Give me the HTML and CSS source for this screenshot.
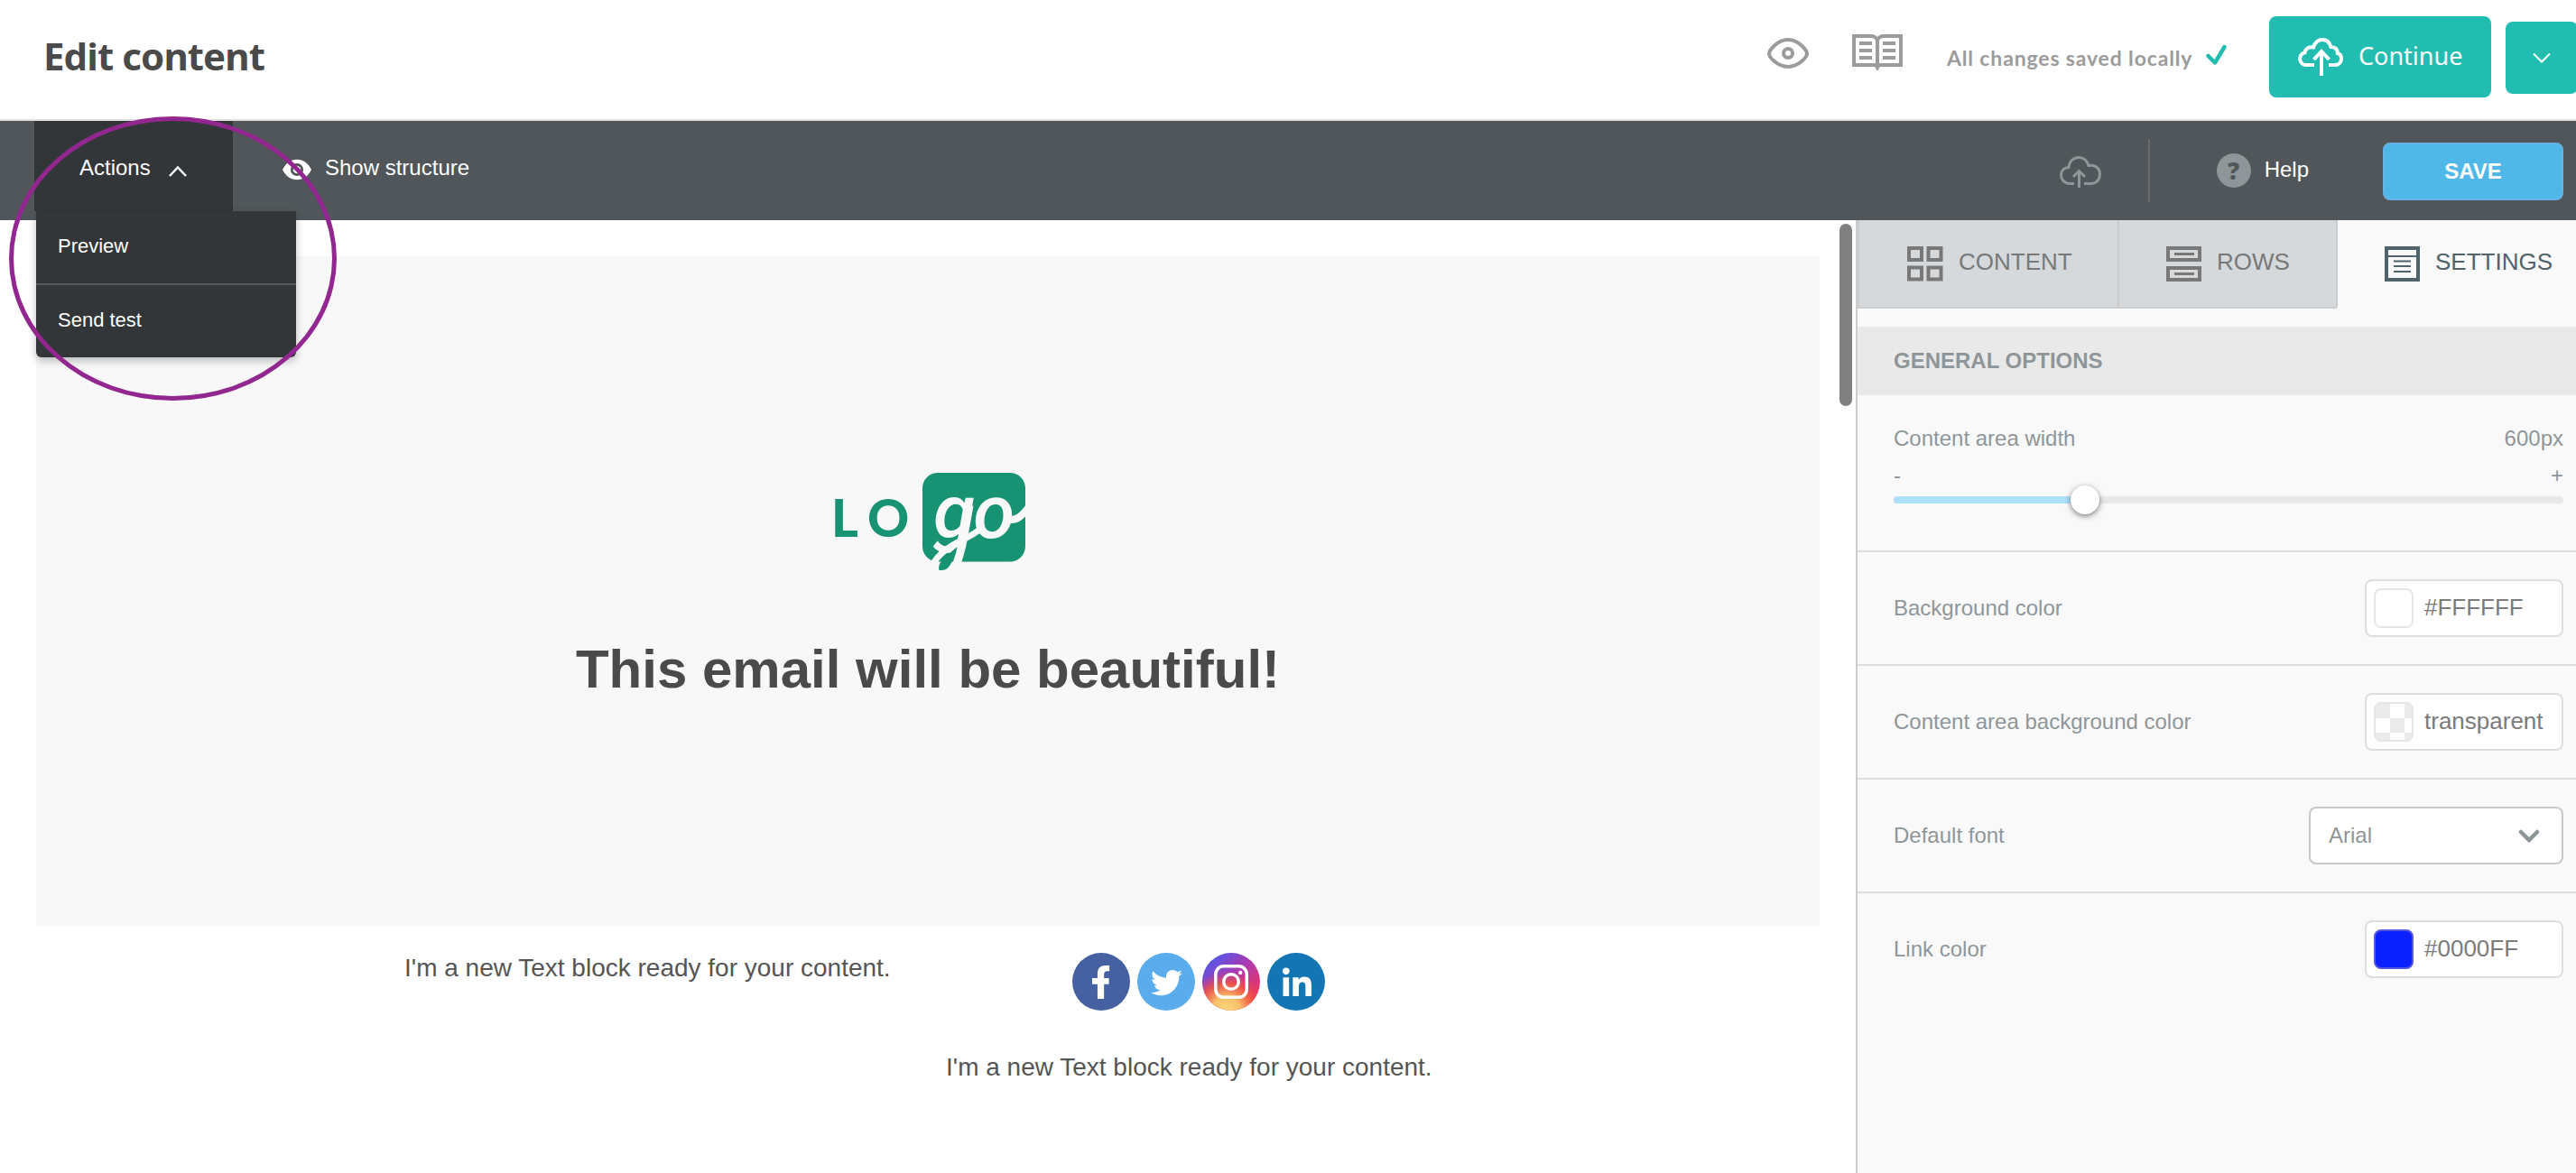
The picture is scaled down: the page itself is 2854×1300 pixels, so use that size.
FILE: index.html
```html
<!DOCTYPE html>
<html lang="en">
<head>
<meta charset="UTF-8">
<title>Edit content</title>
<link rel="stylesheet" href="styles.css">
</head>
<body>
<header class="header">
  <h1>Edit content</h1>
  <div class="header-tools">
    <svg class="icon-eye" width="46" height="34" viewBox="0 0 46 34" fill="none" stroke="#9b9b9b" stroke-width="4">
      <path d="M2 17.500C2 14 11 2 23 2s21 12 21 15.500S35 32 23 32 2 21 2 17.500z"/>
      <circle cx="23" cy="17" r="5"/>
    </svg>
    <svg class="icon-book" width="56" height="40" viewBox="0 0 56 40" fill="none" stroke="#9b9b9b" stroke-width="4">
      <path d="M28 36V6.500Q26 2 21 2H2v32h22q3 0 4 2.500Q29 34 32 34h22V2H35q-5 0-7 4.500"/>
      <path d="M8 10h14M8 18h14M8 26h14M34 10h14M34 18h14M34 26h14"/>
    </svg>
    <span class="saved">All changes saved locally</span>
    <svg class="icon-check" width="24" height="24" viewBox="0 0 24 24" fill="none" stroke="#22bdb1" stroke-width="4.500" stroke-linecap="round" stroke-linejoin="round">
      <path d="M2.500 13l7.500 7.500L20.500 3"/>
    </svg>
    <button class="btn-continue">
      <svg width="50" height="43" viewBox="0 0 50 43" fill="none" stroke="#fff" stroke-width="4">
        <path d="M18 30H9a7 7 0 0 1-1.500-13.800C8 12 12 9.500 17 10.500 19 4.500 23 2 27 2s8 2.500 9.500 8c5 0 7.500 3 7.300 7C47 18 48 21 48 23c0 4-3 7-7 7h-7"/>
        <path d="M26 42V15M17.500 24l8.500-9 8.500 9"/>
      </svg>
      <span>Continue</span>
    </button>
    <button class="btn-more">
      <svg width="20" height="12" viewBox="0 0 20 12" fill="none" stroke="#fff" stroke-width="2"><path d="M1 1.500l9 9 9-9"/></svg>
    </button>
  </div>
</header>

<nav class="toolbar">
  <div class="actions">
    <span>Actions</span>
    <svg width="20" height="13" viewBox="0 0 20 13" fill="none" stroke="#fff" stroke-width="2.500"><path d="M1 12l9-9.500 9 9.500"/></svg>
    <ul class="menu">
      <li>Preview</li>
      <li>Send test</li>
    </ul>
  </div>
  <div class="structure">
    <svg width="32" height="24" viewBox="0 0 34 24">
      <path fill="#fff" d="M0 12C4 4 10 0 17 0s13 4 17 12c-4 8-10 12-17 12S4 20 0 12z"/>
      <circle cx="17" cy="12" r="6" fill="none" stroke="#505659" stroke-width="3"/>
    </svg>
    <span>Show structure</span>
  </div>
  <div class="toolbar-right">
    <svg class="icon-cloud" width="46" height="36" viewBox="0 0 46 36" fill="none" stroke="#8e9699" stroke-width="3">
      <path d="M16 30.500h-5C5.500 30.500 1.500 26 1.500 21S5 12.500 10 12.500C10.500 6 15 1.500 21 1.500c5 0 9.500 3.500 11 9 7-1.500 12.500 3 12.500 9.500 0 6-4 10.500-10 10.500H27"/>
      <path d="M21.500 35V16M15 23l6.500-6.500L28 23"/>
    </svg>
    <div class="help">
      <span class="help-mark">?</span>
      <span>Help</span>
    </div>
    <button class="btn-save">SAVE</button>
  </div>
</nav>

<main class="editor">
  <section class="canvas">
    <div class="hero">
      <svg class="logo" width="254" height="150" viewBox="-20 -20 254 150">
        <defs>
          <clipPath id="logo-clip"><rect x="99" width="114" height="110"/></clipPath>
        </defs>
        <g class="logo-lo"><text x="-2" y="71">L</text><text x="38" y="71">O</text></g>
        <rect x="99" width="114" height="98.500" rx="17" fill="#179273"/>
        <text class="logo-go" x="111" y="72">go</text>
        <g clip-path="url(#logo-clip)" fill="none" stroke="#f8f8f8">
          <path d="M151 36L145 70Q141 92 134 108" stroke-width="9"/>
          <path d="M109 104C122 78 152 74 163 62" stroke-width="7"/>
          <path d="M197 52c7 0 12-4 19-13" stroke-width="8"/>
        </g>
        <path d="M137.500 82c-1 8-6 18-10 23-3 3-6 3-10 3-2-9 7-15 20-26z" fill="#179273"/>
      </svg>
      <h2>This email will be beautiful!</h2>
    </div>
    <div class="blocks">
      <p>I'm a new Text block ready for your content.</p>
      <div class="social">
        <svg width="64" height="64" viewBox="0 0 64 64">
          <circle cx="32" cy="32" r="32" fill="#4661a1"/>
          <path fill="#fff" transform="translate(20.400 14) scale(.0723)" d="M279.140 288v-92.660h-74.690v-60.130c0-25.350 12.420-50.060 52.240-50.060h30.420V2S260.430 0 225.360 0c-73.220 0-121.080 44.380-121.080 124.720v70.620H22.890V288h81.390v224h100.170V288z"/>
        </svg>
        <svg width="64" height="64" viewBox="0 0 64 64">
          <circle cx="32" cy="32" r="32" fill="#5aacec"/>
          <path fill="#fff" transform="translate(15 15.700) scale(.068)" d="M459.370 151.716c.325 4.548.325 9.097.325 13.645 0 138.720-105.583 298.558-298.558 298.558-59.452 0-114.680-17.219-161.137-47.106 8.447.974 16.568 1.299 25.340 1.299 49.055 0 94.213-16.568 130.274-44.832-46.132-.975-84.792-31.188-98.112-72.772 6.498.974 12.995 1.624 19.818 1.624 9.421 0 18.843-1.300 27.614-3.573-48.081-9.747-84.143-51.980-84.143-102.985v-1.299c13.969 7.797 30.214 12.670 47.431 13.319-28.264-18.843-46.781-51.005-46.781-87.391 0-19.492 5.197-37.360 14.294-52.954 51.655 63.675 129.300 105.258 216.365 109.807-1.624-7.797-2.599-15.918-2.599-24.040 0-57.828 46.782-104.934 104.934-104.934 30.213 0 57.502 12.670 76.670 33.137 23.715-4.548 46.456-13.320 66.599-25.340-7.798 24.366-24.366 44.833-46.132 57.827 21.117-2.273 41.584-8.122 60.426-16.243-14.292 20.791-32.161 39.308-52.628 54.253z"/>
        </svg>
        <svg width="64" height="64" viewBox="0 0 64 64">
          <defs>
            <linearGradient id="ig-base" x1=".2" y1="0" x2=".85" y2=".8">
              <stop offset="0" stop-color="#4a5bf0"/>
              <stop offset=".45" stop-color="#a63bb5"/>
              <stop offset="1" stop-color="#f2365d"/>
            </linearGradient>
            <radialGradient id="ig-glow" cx=".42" cy="1" r=".68">
              <stop offset="0" stop-color="#fbd77e"/>
              <stop offset=".35" stop-color="#f9c067"/>
              <stop offset=".7" stop-color="#f2573f" stop-opacity=".85"/>
              <stop offset="1" stop-color="#e0415c" stop-opacity="0"/>
            </radialGradient>
          </defs>
          <circle cx="32" cy="32" r="32" fill="url(#ig-base)"/>
          <circle cx="32" cy="32" r="32" fill="url(#ig-glow)"/>
          <g fill="none" stroke="#fff" stroke-width="3.500">
            <rect x="14.800" y="14.800" width="34.500" height="34.500" rx="9"/>
            <circle cx="32" cy="32" r="8.300"/>
          </g>
          <circle cx="42.200" cy="22" r="2.200" fill="#fff"/>
        </svg>
        <svg width="64" height="64" viewBox="0 0 64 64">
          <circle cx="32" cy="32" r="32" fill="#1375b3"/>
          <path fill="#fff" transform="translate(17 16.500) scale(.0715)" d="M100.280 440H7.400V148.900h92.880zM53.790 108.100C24.090 108.100 0 83.500 0 53.800a53.790 53.790 0 0 1 107.580 0c0 29.700-24.100 54.300-53.790 54.300zM447.900 440h-92.680V302.400c0-34.700-.7-79.200-48.290-79.200-48.290 0-55.690 37.700-55.690 76.700V440h-92.780V148.900h89.080v40.800h1.300c12.400-23.500 42.690-48.300 87.880-48.300 94 0 111.280 61.900 111.280 142.300V440z"/>
        </svg>
      </div>
      <p class="second">I'm a new Text block ready for your content.</p>
    </div>
    <div class="scrollbar"></div>
  </section>

  <aside class="panel">
    <div class="tabs">
      <div class="tab tab-content">
        <svg width="40" height="39" viewBox="0 0 40 39" fill="none" stroke="#787878" stroke-width="4">
          <path d="M2 2h14v13H2zM23.500 2h14v13h-14zM2 23.500h14v13H2zM23.500 23.500h14v13h-14z"/>
        </svg>
        <span>CONTENT</span>
      </div>
      <div class="tab tab-rows">
        <svg width="39" height="39" viewBox="0 0 39 39" fill="none" stroke="#787878" stroke-width="4">
          <path d="M2 2h35v13H2zM2 24h35v13H2z"/>
          <path stroke-width="3" d="M9 8.500h22M9 30.500h22"/>
        </svg>
        <span>ROWS</span>
      </div>
      <div class="tab tab-settings">
        <svg width="39" height="39" viewBox="0 0 39 39" fill="none" stroke="#50626a" stroke-width="4">
          <path d="M2 2h35v35H2z"/>
          <path stroke-width="2" d="M4 11h31M10 16.500h19M10 22h19M10 28h19"/>
        </svg>
        <span>SETTINGS</span>
      </div>
    </div>
    <h3>GENERAL OPTIONS</h3>
    <div class="width-option">
      <div class="line"><span>Content area width</span><span>600px</span></div>
      <div class="line steps"><span>-</span><span>+</span></div>
      <div class="slider"><div class="slider-fill"></div><div class="slider-thumb"></div></div>
    </div>
    <div class="option">
      <label>Background color</label>
      <div class="color-input"><i class="swatch"></i>#FFFFFF</div>
    </div>
    <div class="option">
      <label>Content area background color</label>
      <div class="color-input"><i class="swatch checker"></i>transparent</div>
    </div>
    <div class="option">
      <label>Default font</label>
      <div class="select">Arial
        <svg width="26" height="17" viewBox="0 0 26 17" fill="none" stroke="#8e9699" stroke-width="4.500" stroke-linecap="round"><path d="M4 4l9 9 9-9"/></svg>
      </div>
    </div>
    <div class="option">
      <label>Link color</label>
      <div class="color-input"><i class="swatch blue"></i>#0000FF</div>
    </div>
  </aside>
</main>

<!-- highlight around the Actions menu -->
<div class="highlight"></div>
</body>
</html>
```
FILE: styles.css
```css
* {
    box-sizing: border-box;
}
body {
    margin: 0;
    width: 2854px;
    height: 1300px;
    overflow: hidden;
    position: relative;
    background: #fff;
    font-family: "Liberation Sans", Arial, sans-serif;
    font-size: 24px;
}
svg {
    display: block;
    flex: none;
}
button {
    border: 0;
    padding: 0;
    color: #fff;
    flex: none;
}

/* header */
.header {
    height: 134px;
    border-bottom: 2px solid #e0e0e0;
    display: flex;
    justify-content: space-between;
    padding-left: 48px;
}
h1 {
    margin: 32px 0 0;
    font: bold 42px/60px "Noto Sans", sans-serif;
    letter-spacing: -.9px;
    color: #4a4a4a;
    white-space: nowrap;
}
.header-tools {
    display: flex;
    align-items: flex-start;
    width: 898px;
    margin-right: -2px;
    flex: none;
}
.icon-eye {
    margin-top: 42px;
}
.icon-book {
    margin: 38px 0 0 48px;
}
.saved {
    margin: 49px 0 0 49px;
    width: 287px;
    flex: none;
    font: bold 23px/30px Lato, sans-serif;
    letter-spacing: .85px;
    color: #9b9b9b;
    white-space: nowrap;
}
.icon-check {
    margin: 49px 46px 0 0;
}
.btn-continue {
    width: 246px;
    height: 90px;
    margin: 18px 16px 0 0;
    padding: 0 0 0 32px;
    border-radius: 8px;
    background: #22bdb1;
    display: flex;
    align-items: center;
    gap: 17px;
    font: 27px/40px "Noto Sans", sans-serif;
}
.btn-continue span {
    padding-bottom: 3px;
}
.btn-more {
    width: 80px;
    height: 80px;
    margin-top: 24px;
    border-radius: 8px;
    background: #22bdb1;
    display: flex;
    align-items: center;
    justify-content: center;
}

/* toolbar */
.toolbar {
    height: 110px;
    background: #505659;
    color: #fff;
    display: flex;
    padding-left: 38px;
}
.actions {
    position: relative;
    width: 220px;
    height: 100px;
    padding: 3px 0 0 50px;
    display: flex;
    align-items: center;
    gap: 20px;
    background: #323639;
}
.actions > svg {
    margin-top: 7px;
}
.menu {
    position: absolute;
    left: 2px;
    top: 100px;
    z-index: 2;
    width: 288px;
    margin: 0;
    padding: 0;
    list-style: none;
    font-size: 22px;
    background: #323639;
    border-radius: 0 0 6px 6px;
    box-shadow: 0 4px 10px rgba(0, 0, 0, .25);
}
.menu li {
    height: 80px;
    padding-left: 24px;
    line-height: 77px;
}
.menu li + li {
    height: 82px;
    border-top: 2px solid #55585a;
}
.structure {
    display: flex;
    align-items: center;
    gap: 15px;
    height: 104px;
    margin-left: 55px;
}
.structure svg {
    margin-top: 4px;
}
.toolbar-right {
    display: flex;
    align-items: center;
    margin-left: auto;
    padding-right: 14px;
}
.icon-cloud {
    margin: 4px 52px 0 0;
}
.help {
    display: flex;
    align-items: center;
    gap: 15px;
    height: 70px;
    padding-left: 74px;
    margin-right: 82px;
    border-left: 2px solid #6b6b69;
}
.help-mark {
    width: 38px;
    height: 38px;
    border-radius: 50%;
    background: #8e9699;
    color: #505659;
    font: 800 26px/38px "Open Sans", sans-serif;
    text-align: center;
}
.help span + span {
    padding-bottom: 3px;
}
.btn-save {
    width: 200px;
    height: 64px;
    margin-top: 2px;
    border: 2px solid #68b2e4;
    border-radius: 8px;
    background: #50b7e9;
    font: bold 24px "Liberation Sans", Arial, sans-serif;
}

/* mail canvas */
.editor {
    display: flex;
    height: 1056px;
}
.canvas {
    position: relative;
    width: 2056px;
    padding: 40px 40px 0;
}
.hero {
    height: 742px;
    background: #f8f8f8;
    display: flex;
    flex-direction: column;
    align-items: center;
}
.logo {
    margin: 220px 0 0 3px;
}
.logo-lo {
    font: 900 57px Lato, sans-serif;
    fill: #179273;
}
.logo-go {
    font: italic 500 84px Roboto, sans-serif;
    letter-spacing: -2px;
    fill: #f8f8f8;
}
h2 {
    margin: 52px 0 0;
    font-size: 60px;
    line-height: 72px;
    color: #4a4a4a;
}
.blocks {
    display: grid;
    grid-template-columns: 600px 540px;
    column-gap: 140px;
    padding: 30px 0 0 408px;
    color: #555;
}
.blocks p {
    margin: 0;
    font-size: 28px;
    line-height: 34px;
    white-space: nowrap;
}
.social {
    display: flex;
    gap: 8px;
}
.blocks .second {
    grid-column: 1 / 3;
    padding-left: 600px;
    margin-top: 46px;
}
.scrollbar {
    position: absolute;
    top: 4px;
    right: 4px;
    width: 14px;
    height: 202px;
    border-radius: 7px;
    background: #808080;
}

/* settings panel */
.panel {
    width: 798px;
    border-left: 2px solid #ccc;
    background: #f9f9f9;
    color: #8e9699;
}
.tabs {
    display: flex;
    height: 98px;
    font-size: 26px;
}
.tab {
    display: flex;
    align-items: center;
    gap: 17px;
    border-right: 2px solid #ccc;
    border-bottom: 2px solid #ccc;
    background: #d5d9dc;
    color: #787878;
}
.tab span {
    padding-bottom: 3px;
}
.tab-content {
    width: 290px;
    padding-left: 53px;
    border-left: 2px solid #ccc;
}
.tab-rows {
    width: 242px;
    padding-left: 52px;
    border-bottom-right-radius: 3px;
}
.tab-settings {
    padding-left: 52px;
    border-color: transparent;
    background: none;
    color: #50626a;
}
h3 {
    margin: 20px 0 0;
    padding-left: 40px;
    height: 76px;
    font-size: 24px;
    line-height: 76px;
    background: #e9e9e9;
}
.width-option {
    height: 172px;
    padding: 34px 14px 0 40px;
}
.line {
    display: flex;
    justify-content: space-between;
    line-height: 28px;
}
.steps {
    margin-top: 13px;
}
.slider {
    display: flex;
    align-items: center;
    height: 8px;
    margin-top: 9px;
    border-radius: 4px;
    background: #e8e8e8;
}
.slider-fill {
    width: 196px;
    height: 8px;
    border-radius: 4px 0 0 4px;
    background: #ade1fb;
}
.slider-thumb {
    width: 32px;
    height: 32px;
    border-radius: 50%;
    background: #fff;
    box-shadow: 0 2px 6px rgba(0, 0, 0, .5);
}
.option {
    display: flex;
    align-items: center;
    justify-content: space-between;
    height: 126px;
    padding: 0 14px 0 40px;
    border-top: 2px solid #dcdcdc;
}
.color-input {
    display: flex;
    align-items: center;
    gap: 12px;
    width: 220px;
    height: 64px;
    padding: 0 0 2px 8px;
    border: 2px solid #dedede;
    border-radius: 8px;
    background: #fff;
    color: #7b7b7b;
    font-size: 26px;
}
.swatch {
    width: 44px;
    height: 44px;
    margin-top: 2px;
    border: 2px solid #e6e6e6;
    border-radius: 8px;
    background: #fff;
}
.checker {
    background: repeating-conic-gradient(#fff 0 25%, #ebebeb 0 50%) 0 0 / 32px 32px;
}
.blue {
    border-color: #5558de;
    background: #0a20ff;
}
.select {
    display: flex;
    align-items: center;
    justify-content: space-between;
    width: 282px;
    height: 64px;
    padding: 0 23px 0 20px;
    border: 2px solid #c8c8c8;
    border-radius: 8px;
    background: #fff;
}

.highlight {
    position: absolute;
    left: 10px;
    top: 129px;
    z-index: 5;
    width: 363px;
    height: 315px;
    border: 5px solid #92278f;
    border-radius: 50%;
}
```
